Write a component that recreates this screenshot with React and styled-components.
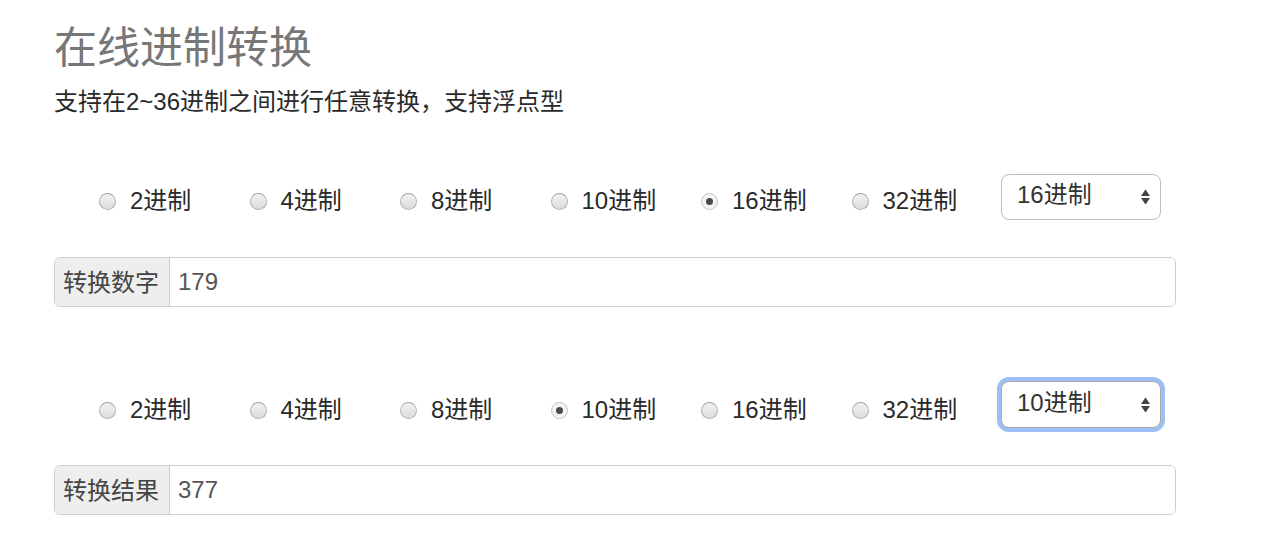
import React, { useState } from 'react'
import styled, { createGlobalStyle, css } from 'styled-components'

const GlobalStyle = createGlobalStyle`
  html, body {
    margin: 0;
    padding: 0;
    background: #fff;
  }
  body {
    font-family: "Liberation Sans", "Noto Sans CJK SC", sans-serif;
    color: #333;
  }
`

const BASES = [2, 4, 8, 10, 16, 32]

const Page = styled.div`
  padding: 24px 0 0 54px;
  width: 1122px;
`

const Title = styled.h1`
  margin: 0;
  font-size: 43px;
  line-height: 48px;
  font-weight: normal;
  color: #777;
`

const Subtitle = styled.p`
  margin: 13px 0 0;
  font-size: 24px;
  line-height: 34px;
  color: #2a2a2a;
`

const Section = styled.section`
  margin-top: ${(p) => p.$top}px;
`

const RadioRow = styled.div`
  display: flex;
  align-items: flex-start;
  padding-left: 44px;
  height: 46px;
`

const RadioItem = styled.label`
  display: flex;
  align-items: center;
  width: 150.5px;
  flex: none;
  height: 30px;
  margin-top: ${(p) => p.$offset}px;
  font-size: 24px;
  line-height: 30px;
  color: #2a2a2a;
  cursor: pointer;
`

const RadioInput = styled.input.attrs({ type: 'radio' })`
  appearance: none;
  -webkit-appearance: none;
  margin: 0 14px 0 1px;
  width: 17px;
  height: 17px;
  flex: none;
  border-radius: 50%;
  border: 1px solid #b3b3b3;
  border-top-color: #a4a4a4;
  background: linear-gradient(#f2f2f2, #dcdcdc);
  box-sizing: border-box;
  display: grid;
  place-items: center;
  outline: none;

  &:checked {
    border-color: #c4c4c4;
    background: #f4f4f4;
  }
  &:checked::after {
    content: '';
    width: 7px;
    height: 7px;
    border-radius: 50%;
    background: #4a4a4a;
  }
`

const SelectWrap = styled.div`
  position: relative;
  width: 160px;
  height: ${(p) => (p.$focused ? 47 : 46)}px;
  flex: none;
`

const Select = styled.select`
  appearance: none;
  -webkit-appearance: none;
  width: 100%;
  height: 100%;
  box-sizing: border-box;
  margin: 0;
  padding: 0 30px 5px 15px;
  border: 1px solid #bdbdbd;
  border-radius: 8px;
  background: #fff;
  font-family: "Liberation Sans", "Noto Sans CJK SC", sans-serif;
  font-size: 24px;
  color: #333;
  outline: none;
  ${(p) =>
    p.$focused &&
    css`
      border-color: #a9a9a9;
      box-shadow: 0 0 0 4px #9cc0f5;
    `}
`

const Arrows = styled.svg`
  position: absolute;
  right: 10px;
  top: 50%;
  margin-top: -8px;
  pointer-events: none;
`

const InputGroup = styled.div`
  display: flex;
  margin-top: ${(p) => p.$top}px;
  height: 50px;
  border: 1px solid #ccc;
  border-radius: 6px;
  box-sizing: border-box;
  overflow: hidden;
`

const Addon = styled.span`
  flex: none;
  width: 115px;
  box-sizing: border-box;
  padding: 0 0 3px 8px;
  display: flex;
  align-items: center;
  background: #eee;
  border-right: 1px solid #ccc;
  font-size: 24px;
  color: #444;
`

const TextField = styled.input`
  flex: 1;
  min-width: 0;
  border: none;
  outline: none;
  padding: 0 0 0 8px;
  font-family: "Liberation Sans", "Noto Sans CJK SC", sans-serif;
  font-size: 24px;
  color: #555;
  background: #fff;
`

const UpDown = () => (
  <Arrows width="11" height="16" viewBox="0 0 11 16">
    <path d="M5.5 0.5 L10 7 L1 7 Z" fill="#444" />
    <path d="M1 9 L10 9 L5.5 15.5 Z" fill="#444" />
  </Arrows>
)

function BaseRow({ name, value, onChange, focused, offset }) {
  return (
    <RadioRow>
      {BASES.map((b) => (
        <RadioItem key={b} $offset={offset}>
          <RadioInput
            name={name}
            checked={value === b}
            onChange={() => onChange(b)}
          />
          {b}进制
        </RadioItem>
      ))}
      <SelectWrap $focused={focused}>
        <Select
          $focused={focused}
          value={value}
          onChange={(e) => onChange(Number(e.target.value))}
        >
          {Array.from({ length: 35 }, (_, i) => i + 2).map((b) => (
            <option key={b} value={b}>
              {b}进制
            </option>
          ))}
        </Select>
        <UpDown />
      </SelectWrap>
    </RadioRow>
  )
}

function convert(str, from, to) {
  const n = parseInt(str, from)
  if (isNaN(n)) return ''
  return n.toString(to)
}

export default function App() {
  const [fromBase, setFromBase] = useState(16)
  const [toBase, setToBase] = useState(10)
  const [num, setNum] = useState('179')

  return (
    <Page>
      <GlobalStyle />
      <Title>在线进制转换</Title>
      <Subtitle>支持在2~36进制之间进行任意转换，支持浮点型</Subtitle>

      <Section $top={55}>
        <BaseRow
          name="from"
          value={fromBase}
          onChange={setFromBase}
          offset={12}
        />
        <InputGroup $top={37}>
          <Addon>转换数字</Addon>
          <TextField value={num} onChange={(e) => setNum(e.target.value)} />
        </InputGroup>
      </Section>

      <Section $top={74}>
        <BaseRow
          name="to"
          value={toBase}
          onChange={setToBase}
          offset={14}
          focused
        />
        <InputGroup $top={38}>
          <Addon>转换结果</Addon>
          <TextField value={convert(num, fromBase, toBase)} readOnly />
        </InputGroup>
      </Section>
    </Page>
  )
}
